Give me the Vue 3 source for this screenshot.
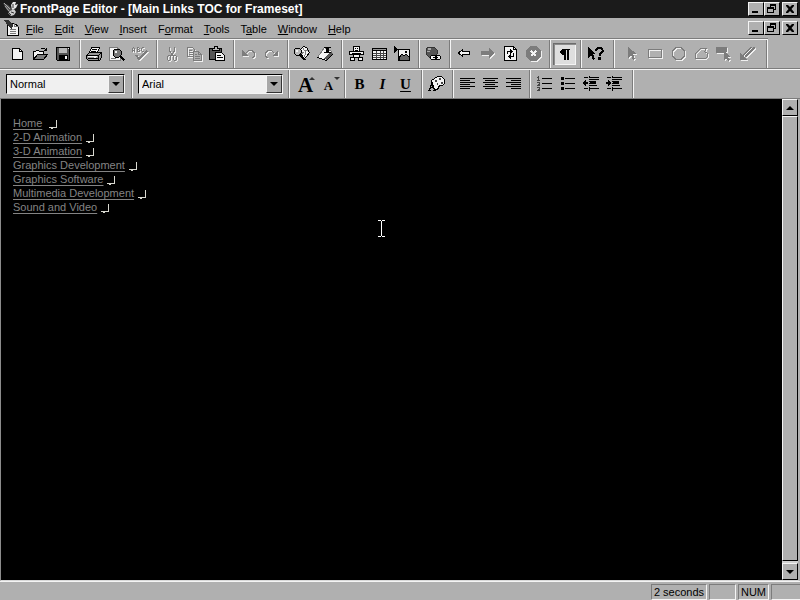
<script setup>
import { ref } from 'vue'

const K = '#000'
const W = '#f4f4f4'
const G = '#7c7c7c'
const D = '#444'
const N = 'none'

// Every shape is [path, fill, stroke, stroke width], drawn on a 23 x 22 button.
const icons = {
  new: [['M6.5 5.5H13.5L16.5 8.5V16.5H6.5Z', W, K], ['M13.5 5.5V8.5H16.5', N, K]],
  open: [
    ['M4.5 16.5V8.5H6.5L7.5 7.5H9.5L10.5 8.5H14.5V11.5', W, K],
    ['M4.5 16.5L8.5 11.5H18.5L14.5 16.5Z', G, K],
    ['M11.5 6.5L12.5 5.5H15.5L17.5 7.5M17.5 4.5V7.5H15', N, K],
  ],
  save: [
    ['M4.5 4.5H17.5V17.5H5.5L4.5 16.5Z', '#555', K],
    ['M7 5H15V10H7Z', '#b9b9b9', N],
    ['M7 12H16V17H7Z', K, N],
    ['M13 13H15V16H13Z', W, N],
    ['M16 5H17V6H16Z', W, N],
  ],
  print: [
    ['M6.5 9.5L8.5 4.5H16.5L14.5 9.5Z', W, K],
    ['M3.5 12.5L6.5 9.5H18.5V14.5L16.5 17.5H5.5L3.5 15.5Z', '#999', K],
    ['M4 12.5H15.5L18 10M15.5 12.5V17M5 15.5H15', N, K],
    ['M9 6.5H14M8 8.5H13', N, K],
    ['M5 13H14V14H5ZM11 14H13V15H11Z', W, N],
  ],
  preview: [
    ['M3.5 4.5H11.5L14.5 7.5V17.5H3.5Z', W, G],
    ['M11.5 4.5V7.5H14.5M5 15.5H10', N, G],
    ['M9 6H13L15 8V12L13 14H9L7 12V8Z', '#777', K],
    ['M9 8H11V10H9Z', W, N],
    ['M14 13L18.5 17.5', N, K, 2],
  ],
  spell: [
    ['M3.5 9V5.5L4.5 4.5L5.5 5.5V9M3.5 7.5H5.5M8.5 4.5V8.5H10L10.5 7.5L9.5 6.5L10.5 5.5L9.5 4.5ZM15 4.5H13.5L12.5 5.5V7.5L13.5 8.5H15', N, G],
    ['M7 12L10 16L18 8', N, G, 2],
  ],
  cut: [
    ['M9.5 4V8L13.5 13M14.5 4V8L10.5 13', N, G],
    ['M8.5 12.5H10.5V16.5L9.5 17.5H8.5L7.5 16.5V13.5ZM13.5 12.5H15.5L16.5 13.5V16.5L15.5 17.5H14.5L13.5 16.5Z', N, G],
  ],
  copy: [
    ['M4.5 4.5H9.5L11.5 6.5V13.5H4.5Z', N, G],
    ['M6 7.5H9M6 9.5H10M6 11.5H10', N, G],
    ['M10.5 8.5H15.5L18.5 11.5V17.5H10.5Z', '#b0b0b0', G],
    ['M15.5 8.5V11.5H18.5M12 11.5H14M12 13.5H17M12 15.5H17', N, G],
  ],
  paste: [
    ['M3.5 5.5H15.5V16.5H3.5Z', '#555', K],
    ['M6.5 7.5V5.5H8.5V3.5H11.5V5.5H13.5V7.5Z', '#bbb', K],
    ['M9.5 9.5H15.5L18.5 12.5V17.5H9.5Z', W, K],
    ['M11 12.5H15M11 14.5H17', N, K],
  ],
  undo: [['M5 7V13H11Z', G, N], ['M8.5 10.5L11.5 7.5H15L17.5 10V13L15.5 15', N, G]],
  redo: [['M18 7V13H12Z', G, N], ['M14.5 10.5L11.5 7.5H8L5.5 10V13L7.5 15', N, G]],
  globe: [
    ['M8.5 7.5L12.5 3.5L15.5 4.5L18.5 9.5L15.5 13.5L12.5 16.5L8.5 12.5Z', W, K],
    ['M12 5L15 10L13 14M9 12L13 9M14 7H17', N, G],
    ['M5 5H8L10 7V10L8 12H5L3 10V7Z', '#bbb', K],
    ['M5 7H7V9H5Z', W, N],
    ['M9 11L14 17', N, K, 2],
  ],
  pin: [
    ['M10.5 4.5L17.5 8.5L18.5 11.5L12.5 17.5L3.5 14.5Z', W, G],
    ['M13 12L18 9V12L13 17L10 16Z', '#555', N],
    ['M3 14.5L12.5 17.5L18.5 11.5', N, K],
    ['M13.5 4V10', N, K, 3],
    ['M10 9.5H17M10 4.5H17', N, K],
  ],
  robot: [
    ['M8.5 3.5H14.5V8.5H8.5Z', W, K],
    ['M10 5H11V6H10ZM12 5H13V6H12ZM10 7H13V8H10Z', K, N],
    ['M4.5 8.5H18.5V11.5H15.5V10.5H7.5V11.5H4.5Z', W, K],
    ['M8.5 11.5H14.5V14.5H8.5Z', W, K],
    ['M5.5 14.5H9.5V17.5H5.5ZM13.5 14.5H17.5V17.5H13.5Z', W, K],
  ],
  table: [
    ['M4.5 5.5H18.5V16.5H4.5Z', W, K],
    ['M4 5H19V8H4Z', K, N],
    ['M5 6.5H18', N, '#999'],
    ['M8.5 8V16M12.5 8V16M5 10.5H18M5 12.5H18M5 14.5H18M15.5 8V16', N, D],
  ],
  image: [
    ['M3 3V10L7 6.5Z', K, N],
    ['M7.5 6.5H18.5V17.5H7.5Z', W, K],
    ['M8 15L11 11L13 13L15 11L18 14V17H8Z', '#666', K],
    ['M14 8H16V10H14Z', K, N],
  ],
  link: [
    ['M6 4H12L15 7V11L12 14H7L4 11V6Z', '#555', '#333'],
    ['M6 5H9V7H6ZM5 8H8V9H5Z', '#aaa', N],
    ['M9.5 12.5H13.5V16.5H9.5L8.5 15.5V13.5ZM14.5 12.5H17.5L18.5 13.5V15.5L17.5 16.5H14.5Z', W, K],
    ['M11 14.5H16', N, K],
  ],
  back: [['M5.5 10L9.5 6.5V8.5H16.5V11.5H9.5V13.5Z', W, K]],
  forward: [['M18 10L13 5V8H5V12H13V15Z', G, N]],
  refresh: [
    ['M5.5 3.5H14.5L17.5 6.5V17.5H5.5Z', W, K],
    ['M14.5 3.5V6.5H17.5M8.5 11V8.5H12M14.5 10V13.5H11', N, K],
    ['M11 6L14 8.5L11 11ZM12 11L9 13.5L12 16Z', K, N],
  ],
  stop: [['M8 3H14L19 8V13L14 18H8L4 13V8Z', G, N], ['M9 8L14 13M14 8L9 13', N, W, 2]],
  pilcrow: [['M10 6H17V7H16V17H14V7H13V17H11V12H9L7 10V8L9 6Z', K, N]],
  help: [
    ['M4 4V15L7 12L9 17L11 16L9 11H12Z', K, N],
    ['M12 8V6.5L14 5H17L18.5 7V8.5L15.5 11V13', N, K, 2],
    ['M14 14H17V17H14Z', K, N],
  ],
  arrow: [['M7 4V15L10 12L12 17L14 16L12 11H16Z', G, N]],
  rect: [['M4.5 6.5H17.5V14.5H4.5Z', N, G]],
  circle: [['M9 4.5H14L17.5 8V13L14 16.5H9L5.5 13V8Z', N, G]],
  polygon: [['M5.5 15.5V10.5L10.5 5.5H16.5L14.5 8.5L17.5 10.5V13.5L15.5 15.5Z', N, G]],
  hotspot: [['M3 4H14V9H11V10H3Z', G, N], ['M11 8V17L13 15L15 18L17 17L15 14H18Z', G, N]],
  highlight: [['M18.5 4.5L9 14M15.5 4L7 12.5', N, G, 2], ['M4 10V17H11L8.5 14.5L4 10Z', G, N]],
  palette: [
    ['M12.5 3.5H16.5L19.5 6.5V10.5L17.5 12.5H14.5L12.5 16.5H9.5L6.5 12.5V7.5Z', W, K],
    ['M10 7H12V9H10ZM14 5H16V7H14ZM16 9H18V11H16ZM12 10H13V12H12Z', D, N],
    ['M3 17.5H6M8 17.5H11M4.5 17L7 9.5L9.5 17M5 14.5H9', N, K],
  ],
  left: [['M4 5.5H19M4 7.5H14M4 9.5H19M4 11.5H14M4 13.5H19M4 15.5H14', N, K]],
  center: [['M4 5.5H19M6 7.5H16M4 9.5H19M6 11.5H16M4 13.5H19M6 15.5H16', N, K]],
  right: [['M4 5.5H19M9 7.5H19M4 9.5H19M9 11.5H19M4 13.5H19M9 15.5H19', N, K]],
  numbered: [
    ['M9 5.5H19M9 10.5H19M9 15.5H19', N, K],
    ['M5.5 3V7M4 4.5H6M4 7.5H7M4 9.5H6.5V11L4.5 12.5H7M4 14.5H6.5V17.5H4M5 16H7', N, D],
  ],
  bullets: [['M9 5.5H19M9 10.5H19M9 15.5H19', N, K], ['M5 4H8V7H5ZM5 9H8V12H5ZM5 14H8V17H5Z', K, N]],
  outdent: [
    ['M5 4.5H9M11 4.5H20M11 6.5H20M11 12.5H18M5 15.5H9M11 15.5H20', N, K],
    ['M11 8H17V11H11Z', K, N],
    ['M10.5 3V5M10.5 6V7M10.5 8V9M10.5 10V11M10.5 12V13M10.5 14V18', N, K],
    ['M4 9H9V11H4ZM6 7H7V13H6ZM5 8H6V12H5Z', K, N],
  ],
  indent: [
    ['M5 4.5H9M11 4.5H20M11 6.5H20M11 12.5H18M5 15.5H9M11 15.5H20', N, K],
    ['M11 8H17V11H11Z', K, N],
    ['M10.5 3V5M10.5 6V7M10.5 8V9M10.5 10V11M10.5 12V13M10.5 14V18', N, K],
    ['M4 9H9V11H4ZM6 7H7V13H6ZM7 8H8V12H7Z', K, N],
  ],
}

const b = (icon, label, off = false) => ({ icon, label, off })
const t = (text, label, cls) => ({ text, label, cls })

const standard = [
  [b('new', 'New'), b('open', 'Open'), b('save', 'Save')],
  [b('print', 'Print'), b('preview', 'Preview'), b('spell', 'Check Spelling', true)],
  [b('cut', 'Cut', true), b('copy', 'Copy', true), b('paste', 'Paste')],
  [b('undo', 'Undo', true), b('redo', 'Redo', true)],
  [b('globe', 'Show Explorer'), b('pin', 'Show To Do List')],
  [b('robot', 'Insert WebBot'), b('table', 'Insert Table'), b('image', 'Insert Image')],
  [b('link', 'Create Link')],
  [b('back', 'Back'), b('forward', 'Forward', true), b('refresh', 'Refresh'), b('stop', 'Stop', true)],
  [{ ...b('pilcrow', 'Show Paragraph Marks'), pressed: true }],
  [b('help', 'Help')],
]
const drawing = [
  b('arrow', 'Select', true), b('rect', 'Rectangle', true), b('circle', 'Circle', true),
  b('polygon', 'Polygon', true), b('hotspot', 'Highlight Hotspots', true), b('highlight', 'Make Transparent', true),
]
const format = [
  [t('A', 'Increase Text Size', 'grow'), t('A', 'Decrease Text Size', 'shrink')],
  [t('B', 'Bold', 'bold'), t('I', 'Italic', 'italic'), t('U', 'Underline', 'under')],
  [b('palette', 'Text Color')],
  [b('left', 'Align Left'), b('center', 'Center'), b('right', 'Align Right')],
  [b('numbered', 'Numbered List'), b('bullets', 'Bulleted List'), b('outdent', 'Decrease Indent'), b('indent', 'Increase Indent')],
]

const menus = [
  ['', 'F', 'ile'], ['', 'E', 'dit'], ['', 'V', 'iew'], ['', 'I', 'nsert'], ['F', 'o', 'rmat'],
  ['', 'T', 'ools'], ['T', 'a', 'ble'], ['', 'W', 'indow'], ['', 'H', 'elp'],
]
const links = [
  'Home', '2-D Animation', '3-D Animation', 'Graphics Development',
  'Graphics Software', 'Multimedia Development', 'Sound and Video',
]
const windowButtons = [
  { label: 'Minimize', d: 'M3 8H9V10H3Z' },
  { label: 'Restore', d: 'M5 1H11V7H9V6H10V3H6V4H5ZM2 4H9V10H2ZM3 6V9H8V6Z' },
  { label: 'Close', d: 'M3 2H5L7 4L9 2H11V3L8.5 6L11 9V10H9L7 8L5 10H3V9L5.5 6L3 3Z' },
]
const style = ref('Normal')
const font = ref('Arial')
</script>

<template>
  <div class="window">
    <header class="title-bar">
      <svg class="app-icon" width="18" height="18" aria-hidden="true">
        <path d="M1 3L6 5L10 9L8 13L5 10Z" fill="#555" />
        <path d="M2 3L8 9M3 6L7 11" stroke="#aaa" fill="none" />
        <path d="M11 2H14L13 5L16 4L14 8L10 10L9 5Z" fill="#e8e8e8" />
        <path d="M8 11L12 9L14 12L12 15L9 16L6 13Z" fill="#ccc" />
        <path d="M11 4V8M9 12L12 13M6 12L9 15" stroke="#333" fill="none" />
      </svg>
      <h1>FrontPage Editor - [Main Links TOC for Frameset]</h1>
      <div class="controls">
        <button v-for="w in windowButtons" :key="w.label" :aria-label="w.label">
          <svg width="14" height="12"><path :d="w.d" fill-rule="evenodd" /></svg>
        </button>
      </div>
    </header>

    <nav class="menu-bar" aria-label="Main menu">
      <svg class="doc-icon" width="18" height="19" aria-hidden="true" shape-rendering="crispEdges">
        <path d="M5.5 5.5H12.5L16.5 8.5V17.5H5.5Z" fill="#f4f4f4" stroke="#000" />
        <path d="M12.5 5V8.5H16.5M8 11.5H14M8 13.5H14M8 15.5H14" fill="none" stroke="#777" />
        <path d="M2 2H6L11 7L10 12L6 8Z" fill="#333" />
      </svg>
      <button v-for="m in menus" :key="m.join('')">{{ m[0] }}<u>{{ m[1] }}</u>{{ m[2] }}</button>
      <div class="controls">
        <button v-for="w in windowButtons" :key="w.label" :aria-label="w.label + ' document'">
          <svg width="14" height="12"><path :d="w.d" fill-rule="evenodd" /></svg>
        </button>
      </div>
    </nav>

    <div class="toolbar-row">
      <div class="toolbar standard" role="toolbar" aria-label="Standard">
        <div v-for="(group, i) in standard" :key="i" class="group">
          <button
            v-for="item in group" :key="item.icon" class="tool"
            :class="{ pressed: item.pressed }" :disabled="item.off" :aria-label="item.label"
          >
            <svg width="23" height="22" shape-rendering="crispEdges">
              <path v-for="(s, k) in icons[item.icon]" :key="k" :d="s[0]" :fill="s[1]" :stroke="s[2]" :stroke-width="s[3] || 1" />
            </svg>
          </button>
        </div>
      </div>
      <div class="toolbar drawing" role="toolbar" aria-label="Image">
        <div class="group">
          <button v-for="item in drawing" :key="item.icon" class="tool" disabled :aria-label="item.label">
            <svg width="23" height="22" shape-rendering="crispEdges">
              <path v-for="(s, k) in icons[item.icon]" :key="k" :d="s[0]" :fill="s[1]" :stroke="s[2]" :stroke-width="s[3] || 1" />
            </svg>
          </button>
        </div>
      </div>
    </div>

    <div class="toolbar-row">
      <div class="toolbar format" role="toolbar" aria-label="Format">
        <div class="group field">
          <label class="combo style-combo">
            <select v-model="style" aria-label="Paragraph style"><option>Normal</option></select>
            <span class="drop"></span>
          </label>
        </div>
        <div class="group field">
          <label class="combo font-combo">
            <select v-model="font" aria-label="Font"><option>Arial</option></select>
            <span class="drop"></span>
          </label>
        </div>
        <div v-for="(group, i) in format" :key="i" class="group">
          <button v-for="item in group" :key="item.label" class="tool" :class="item.cls" :aria-label="item.label">
            <svg v-if="item.icon" width="23" height="22" shape-rendering="crispEdges">
              <path v-for="(s, k) in icons[item.icon]" :key="k" :d="s[0]" :fill="s[1]" :stroke="s[2]" :stroke-width="s[3] || 1" />
            </svg>
            <template v-else>{{ item.text }}</template>
          </button>
        </div>
      </div>
    </div>

    <main class="workspace">
      <div class="page">
        <p v-for="l in links" :key="l" :class="{ wide: l === 'Home' }">
          <a href="#">{{ l }}</a>
          <svg width="8" height="9" aria-hidden="true" shape-rendering="crispEdges">
            <path d="M7 0H8V8H0V7H7ZM2 8H4V9H2Z" fill="#d8d8d0" />
          </svg>
        </p>
        <svg class="caret" width="7" height="17" aria-hidden="true" shape-rendering="crispEdges">
          <path d="M0 .5H3M4 .5H7M3.5 1V16M0 16.5H3M4 16.5H7" stroke="#fff" />
        </svg>
      </div>
      <div class="scrollbar">
        <button aria-label="Scroll up"><span class="up"></span></button>
        <div class="thumb"></div>
        <button aria-label="Scroll down"><span class="down"></span></button>
      </div>
    </main>

    <footer class="status-bar">
      <span class="time">2 seconds</span>
      <span class="blank"></span>
      <span class="num">NUM</span>
      <span class="blank last"></span>
    </footer>
  </div>
</template>

<style>
body {
  background: #b0b0b0;
}
</style>

<style scoped>
* {
  box-sizing: border-box;
}
.window {
  display: flex;
  flex-direction: column;
  height: 100vh;
  overflow: hidden;
  background: #b0b0b0;
  color: #000;
  font: 11px/14px "Liberation Sans", Arial, sans-serif;
}
button {
  margin: 0;
  padding: 0;
  border: 0;
  background: none;
  color: inherit;
  font: inherit;
}
svg {
  display: block;
}
.title-bar {
  display: flex;
  flex: none;
  height: 18px;
  padding: 0 2px;
  background: #1b1b1b;
  color: #fff;
}
h1 {
  margin: 0;
  font: bold 12px/18px "Liberation Sans", Arial, sans-serif;
  white-space: nowrap;
}
.controls {
  display: flex;
  margin: 2px 0 0 auto;
}
.menu-bar .controls {
  margin-top: 3px;
}
.controls button {
  width: 16px;
  height: 14px;
  border: 1px solid;
  border-color: #f4f4f4 #000 #000 #f4f4f4;
  background: #b0b0b0;
  color: #000;
}
.controls button:last-child {
  margin-left: 2px;
}
.menu-bar {
  display: flex;
  flex: none;
  height: 21px;
  padding: 0 2px;
}
.doc-icon {
  margin-right: 1px;
}
.menu-bar > button {
  height: 21px;
  padding: 0 6px 0 5px;
}
.toolbar-row {
  display: flex;
  flex: none;
  height: 30px;
}
.toolbar {
  display: flex;
  height: 30px;
  border-top: 1px solid #f4f4f4;
  border-bottom: 1px solid #7c7c7c;
  box-shadow: 0 -1px #7c7c7c;
}
.format {
  flex: 1;
}
.group {
  display: flex;
  align-items: center;
  padding: 0 4px 0 2px;
  border-right: 1px solid #7c7c7c;
  box-shadow: 1px 0 #f4f4f4;
  margin-right: 1px;
}
.group:first-child {
  padding-left: 6px;
}
.standard .group:last-child {
  padding-right: 6px;
}
.drawing .group,
.format .group:last-child {
  padding-right: 7px;
}
.group.field {
  padding: 0 5px;
}
.group.field:first-child {
  padding: 0 6px;
}
.group.field + .group:not(.field) {
  padding-left: 4px;
}
.tool {
  width: 23px;
  height: 22px;
  font: bold 15px/22px "Liberation Serif", "Times New Roman", serif;
}
.tool:disabled svg {
  filter: drop-shadow(1px 1px 0 #f0f0f0);
}
.pressed {
  background: #dedede;
  box-shadow: inset 1px 1px #6c6c6c, inset 2px 2px #8c8c8c, inset -1px -1px #f4f4f4;
}
.grow,
.shrink {
  position: relative;
}
.grow {
  font-size: 21px;
  line-height: 24px;
}
.shrink {
  padding-top: 2px;
  font-size: 13px;
}
.grow::after,
.shrink::after {
  content: "";
  position: absolute;
  top: 4px;
  right: 2px;
  border: 3px solid transparent;
  border-top: 0;
  border-bottom-color: #333;
}
.shrink::after {
  right: 0;
  border-top: 3px solid #333;
  border-bottom: 0;
}
.italic {
  font-style: italic;
}
.under {
  text-decoration: underline;
  text-underline-offset: 2px;
}
.combo {
  position: relative;
  display: block;
  height: 20px;
}
.style-combo {
  width: 119px;
}
.font-combo {
  width: 145px;
}
select {
  appearance: none;
  display: block;
  width: 100%;
  height: 20px;
  margin: 0;
  padding: 0 18px 0 3px;
  border: 1px solid #000;
  border-right-color: #f4f4f4;
  border-bottom-color: #f4f4f4;
  border-radius: 0;
  background: #f0f0f0;
  color: #000;
  font: inherit;
}
.drop {
  position: absolute;
  top: 1px;
  right: 1px;
  display: flex;
  align-items: center;
  justify-content: center;
  width: 16px;
  height: 18px;
  border: 1px solid;
  border-color: #f4f4f4 #333 #333 #f4f4f4;
  background: #a8a8a8;
  pointer-events: none;
}
.drop::after,
.down,
.up {
  content: "";
  border: 4px solid transparent;
  border-top-color: #000;
  border-bottom: 0;
}
.up {
  border-top: 0;
  border-bottom: 4px solid #000;
}
.workspace {
  display: flex;
  flex: 1;
  min-height: 0;
  border: solid;
  border-width: 0 2px 1px 1px;
  border-color: #000 #b0b0b0 #d8d8d8 #8c8c8c;
}
.page {
  position: relative;
  flex: 1;
  padding: 17px 12px;
  background: #000;
}
.page p {
  display: flex;
  align-items: center;
  gap: 4px;
  height: 14px;
  margin: 0;
}
.page p.wide {
  gap: 7px;
}
.page a {
  color: #848484;
  text-decoration: underline;
  text-underline-offset: 2px;
}
.page p svg {
  margin-top: 2px;
}
.caret {
  position: absolute;
  left: 377px;
  top: 121px;
}
.scrollbar {
  display: flex;
  flex-direction: column;
  width: 16px;
  background: #d0d0d0;
}
.scrollbar button,
.thumb {
  border: 1px solid;
  border-color: #f4f4f4 #000 #000 #f4f4f4;
  background: #b0b0b0;
}
.scrollbar button {
  display: flex;
  flex: none;
  align-items: center;
  justify-content: center;
  height: 17px;
}
.thumb {
  flex: 1;
  margin-bottom: 2px;
}
.status-bar {
  display: flex;
  flex: none;
  justify-content: flex-end;
  gap: 2px;
  height: 19px;
  padding: 2px 0 0;
  border-top: 1px solid #f4f4f4;
}
.status-bar span {
  height: 16px;
  border: 1px solid;
  border-color: #7c7c7c #f4f4f4 #f4f4f4 #7c7c7c;
  text-align: center;
  white-space: nowrap;
}
.time {
  width: 56px;
}
.blank {
  width: 27px;
}
.num {
  width: 31px;
}
.status-bar .last {
  width: 29px;
  border-right: 0;
}
</style>
